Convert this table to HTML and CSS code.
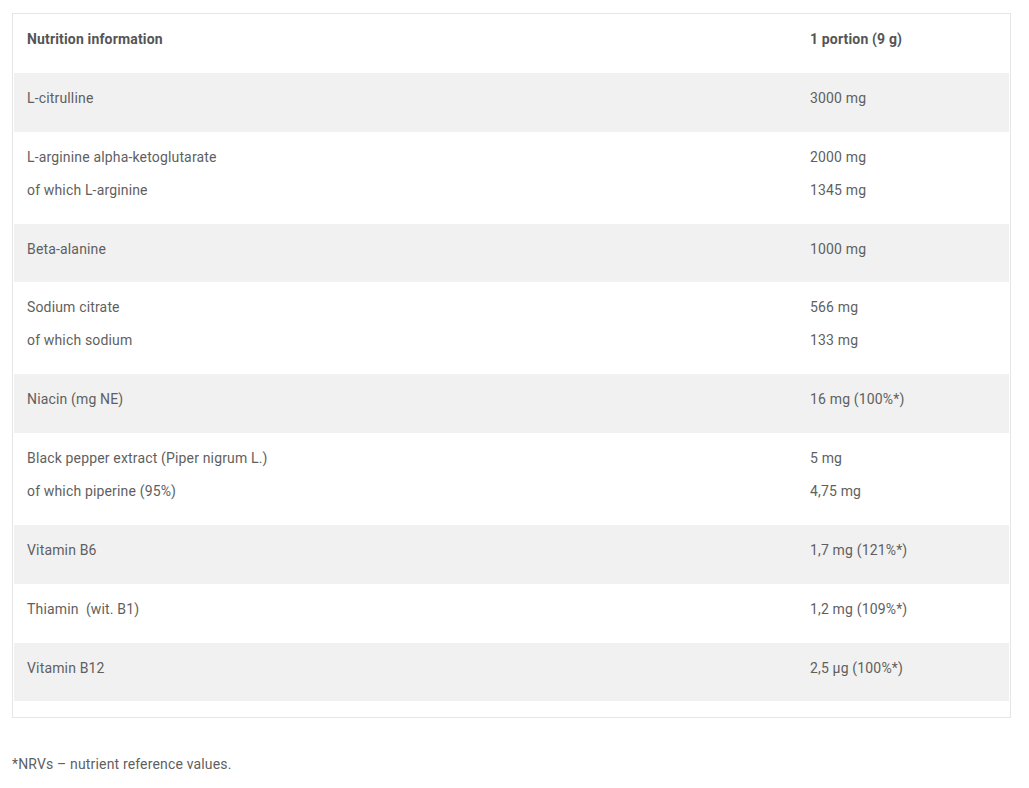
FILE: index.html
```html
<!DOCTYPE html>
<html>
<head>
<meta charset="utf-8">
<link rel="stylesheet" href="styles.css">
</head>
<body>
<div class="panel">
  <div class="row head">
    <div class="c1"><p>Nutrition information</p></div>
    <div class="c2"><p>1 portion (9 g)</p></div>
  </div>
  <div class="row alt">
    <div class="c1"><p>L-citrulline</p></div>
    <div class="c2"><p>3000 mg</p></div>
  </div>
  <div class="row">
    <div class="c1"><p>L-arginine alpha-ketoglutarate</p><p>of which L-arginine</p></div>
    <div class="c2"><p>2000 mg</p><p>1345 mg</p></div>
  </div>
  <div class="row alt">
    <div class="c1"><p>Beta-alanine</p></div>
    <div class="c2"><p>1000 mg</p></div>
  </div>
  <div class="row">
    <div class="c1"><p>Sodium citrate</p><p>of which sodium</p></div>
    <div class="c2"><p>566 mg</p><p>133 mg</p></div>
  </div>
  <div class="row alt">
    <div class="c1"><p>Niacin (mg NE)</p></div>
    <div class="c2"><p>16 mg (100%*)</p></div>
  </div>
  <div class="row">
    <div class="c1"><p>Black pepper extract (Piper nigrum L.)</p><p>of which piperine (95%)</p></div>
    <div class="c2"><p>5 mg</p><p>4,75 mg</p></div>
  </div>
  <div class="row alt">
    <div class="c1"><p>Vitamin B6</p></div>
    <div class="c2"><p>1,7 mg (121%*)</p></div>
  </div>
  <div class="row">
    <div class="c1"><p>Thiamin&nbsp; (wit. B1)</p></div>
    <div class="c2"><p>1,2 mg (109%*)</p></div>
  </div>
  <div class="row alt">
    <div class="c1"><p>Vitamin B12</p></div>
    <div class="c2"><p>2,5 µg (100%*)</p></div>
  </div>
</div>
<p class="note">*NRVs – nutrient reference values.</p>
</body>
</html>
```

FILE: styles.css
```css
* { box-sizing: border-box; }
html, body { background: #fff; }
body {
  margin: 0;
  padding: 13px 19px 0 12px;
  font-family: Roboto, "Liberation Sans", Arial, sans-serif;
  font-size: 14px;
  letter-spacing: 0.16px;
  color: #5f5f5f;
}
.panel {
  width: 999px;
  border: 1px solid #e6e6e6;
  padding: 0 1px 16px 1px;
}
.row {
  display: grid;
  grid-template-columns: 783px 1fr;
  padding: 15px 0 10.83px;
}
.row.alt { background: #f1f1f1; }
.row.head { padding: 15px 0 11px; }
.head p { font-weight: 700; color: #555; }
.c1, .c2 { padding-left: 13px; }
.row p {
  margin: 0 0 13px;
  line-height: 20px;
}
.note {
  margin: 36px 0 0;
  line-height: 20px;
}
```
